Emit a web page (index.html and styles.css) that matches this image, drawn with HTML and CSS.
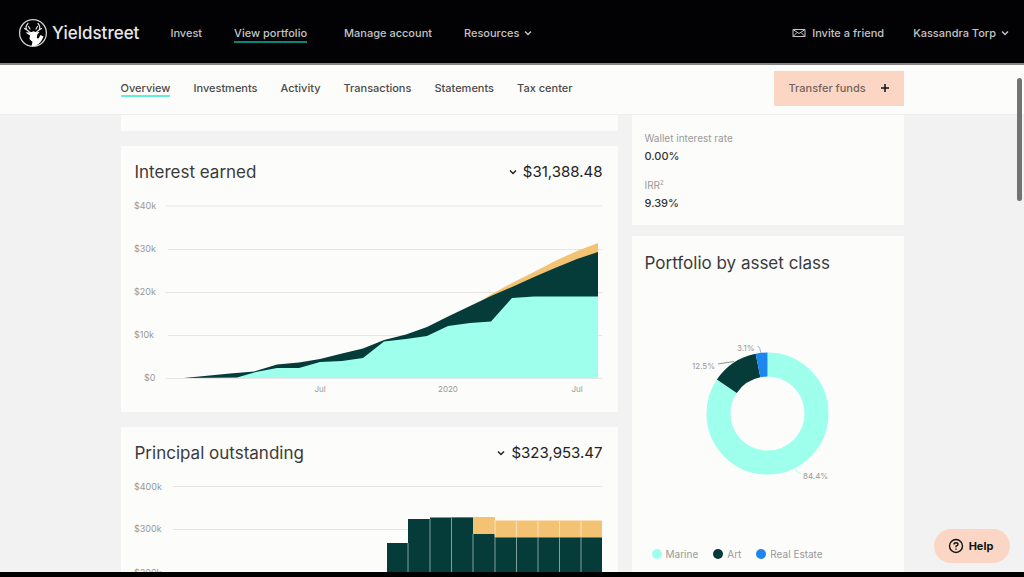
FILE: index.html
```html
<!DOCTYPE html>
<html lang="en">
<head>
<meta charset="utf-8">
<meta name="viewport" content="width=device-width, initial-scale=1">
<title>Yieldstreet – Portfolio</title>
<link rel="stylesheet" href="styles.css">
</head>
<body>
<header class="topbar">
  <a class="brand" href="#">
    <svg class="brand-mark" viewBox="0 0 30 30" aria-hidden="true">
      <circle cx="15" cy="15" r="13.4" fill="none" stroke="#d0d0d0" stroke-width="1.3"/>
      <path d="M10 5.500 Q6.500 9 9 12 Q11 14 13.500 15 M20 5.500 Q23 9 21 12 Q19 14 17 15 M9 12 L6.500 10.500 M21 12 L23.500 10.500 M10.500 8.500 L12 11 M19.500 8.500 L18 11" fill="none" stroke="#e4e4e4" stroke-width="1.200" stroke-linecap="round"/>
      <path d="M7.500 14.500 L13 14.200 L15.500 13.300 L18 14.200 L21.500 14 L19.300 16.500 L18.800 20 L20.500 20.500 L22.500 17 L25.500 18.500 Q23 25.500 17.500 28 L13.500 28 L14.500 24 L11.500 21 L12 17.500 Z" fill="#fff"/>
    </svg>
    <span>Yieldstreet</span>
  </a>
  <nav class="main-nav" aria-label="Main">
    <a href="#">Invest</a>
    <a class="current" href="#" aria-current="page">View portfolio</a>
    <a class="spaced" href="#">Manage account</a>
    <button type="button">Resources
      <svg class="chevron" viewBox="0 0 8 8" aria-hidden="true"><path d="M1 2.500 L4 5.500 L7 2.500"/></svg>
    </button>
  </nav>
  <div class="account">
    <a href="#">
      <svg class="mail" viewBox="0 0 14 10" aria-hidden="true"><path d="M1 1.500 H13 V8.500 H1 Z M1 1.500 L7 5.500 L13 1.500 M1 8.500 L5 4.500 M13 8.500 L9 4.500"/></svg>
      Invite a friend
    </a>
    <button type="button">Kassandra Torp
      <svg class="chevron" viewBox="0 0 8 8" aria-hidden="true"><path d="M1 2.500 L4 5.500 L7 2.500"/></svg>
    </button>
  </div>
</header>

<div class="subbar">
  <div class="container subbar-row">
    <nav class="tabs" aria-label="Portfolio">
      <a class="current" href="#" aria-current="page">Overview</a>
      <a href="#">Investments</a>
      <a href="#">Activity</a>
      <a href="#">Transactions</a>
      <a href="#">Statements</a>
      <a href="#">Tax center</a>
    </nav>
    <button class="transfer" type="button">Transfer funds
      <svg viewBox="0 0 10 10" aria-hidden="true"><path d="M5 1 V9 M1 5 H9"/></svg>
    </button>
  </div>
</div>

<main class="content">
  <div class="container columns">
    <div class="column wide">
      <section class="card stub"></section>

      <section class="card chart-card">
        <div class="card-head">
          <h2>Interest earned</h2>
          <button class="amount" type="button">
            <svg class="chevron" viewBox="0 0 8 8" aria-hidden="true"><path d="M1 2.500 L4 5.500 L7 2.500"/></svg>
            $31,388.48
          </button>
        </div>
        <svg class="chart" viewBox="135 192 468 206" role="img" aria-label="Interest earned over time">
          <g class="grid">
            <path d="M166 206H602M168 249.500H602M166 292.500H602M168 335.500H602M166 378.500H602"/>
          </g>
          <path fill="#f3c272" d="M483 300L490 295L512 283L534 272L555 261L577 251L598 243V300Z"/>
          <path fill="#053c3a" d="M184 378L230 373.500L254 371.500L277 364.500L299 362.500L320 359L342 353.500L363 348.500L384 340L406 334.500L427 327L448 316.500L470 306L491 296L512 287L534 277L555 268L577 259L598 252V378Z"/>
          <path fill="#9dffec" d="M184 378L237 377.500L256 372L277 368L299 368L320 362L342 361L363 358L384 341.500L406 339L427 336L448 326L470 323L491 321.500L512 298L534 296.500H598V378Z"/>
          <g class="y-labels">
            <text x="134" y="209">$40k</text>
            <text x="134" y="252">$30k</text>
            <text x="134" y="295">$20k</text>
            <text x="134" y="338">$10k</text>
            <text x="144" y="381">$0</text>
          </g>
          <g class="x-labels">
            <text x="320" y="392">Jul</text>
            <text x="448" y="392">2020</text>
            <text x="577" y="392">Jul</text>
          </g>
        </svg>
      </section>

      <section class="card chart-card">
        <div class="card-head">
          <h2>Principal outstanding</h2>
          <button class="amount" type="button">
            <svg class="chevron" viewBox="0 0 8 8" aria-hidden="true"><path d="M1 2.500 L4 5.500 L7 2.500"/></svg>
            $323,953.47
          </button>
        </div>
        <svg class="chart" viewBox="135 473 468 206" role="img" aria-label="Principal outstanding over time">
          <g class="grid">
            <path d="M173 486.500H602M173 529.500H602M173 572.500H602M173 615.500H602M173 658.500H602"/>
          </g>
          <path fill="#f3c272" d="M452 517h21v5h-21zM473 517h22v30h-22zM495 520.500H602V547H495z"/>
          <path fill="#053c3a" d="M387 543H408V519H430V517.500H473V534H495V537.500H602V659H387Z"/>
          <path stroke="#7ea19b" d="M408 543V659M430 519V659M451.500 517V659M473 534V659M495 537V659M516.500 537V659M538 537V659M559.500 537V659M581 537V659"/>
          <path stroke="#fbe3b8" d="M495 520V537M516.500 520V537M538 520V537M559.500 520V537M581 520V537"/>
          <g class="y-labels">
            <text x="134" y="490">$400k</text>
            <text x="134" y="532">$300k</text>
            <text x="134" y="576">$200k</text>
          </g>
        </svg>
      </section>
    </div>

    <div class="column narrow">
      <section class="card facts">
        <dl>
          <dt>Wallet interest rate</dt>
          <dd>0.00%</dd>
          <dt>IRR<sup>2</sup></dt>
          <dd>9.39%</dd>
        </dl>
      </section>

      <section class="card asset-card">
        <h2>Portfolio by asset class</h2>
        <svg class="chart" viewBox="645 286 246 246" role="img" aria-label="Asset classes: Marine 84.4%, Art 12.5%, Real Estate 3.1%">
          <g fill="none" stroke-width="24" transform="rotate(-90 767.500 413.500)">
            <circle cx="767.500" cy="413.500" r="49" pathLength="1000" stroke="#9dffec" stroke-dasharray="844 156"/>
            <circle cx="767.500" cy="413.500" r="49" pathLength="1000" stroke="#053c3a" stroke-dasharray="125 875" stroke-dashoffset="-844"/>
            <circle cx="767.500" cy="413.500" r="49" pathLength="1000" stroke="#1c86ee" stroke-dasharray="31 969" stroke-dashoffset="-969"/>
          </g>
          <path fill="none" stroke="#7d9a99" d="M718 364L724 363L734 361.500"/>
          <path fill="none" stroke="#8ab8d8" d="M758 346Q760 347 761 353"/>
          <path fill="none" stroke="#c3f5ec" d="M795 468Q797 473 801 474"/>
          <g class="slice-labels">
            <text x="737" y="351">3.1%</text>
            <text x="692" y="369">12.5%</text>
            <text x="803" y="479">84.4%</text>
          </g>
        </svg>
        <ul class="legend">
          <li><span class="dot marine"></span>Marine</li>
          <li><span class="dot art"></span>Art</li>
          <li><span class="dot estate"></span>Real Estate</li>
        </ul>
      </section>
    </div>
  </div>
</main>

<footer class="base"></footer>
<div class="scroll-thumb"></div>
<button class="help" type="button">
  <svg viewBox="0 0 16 16" aria-hidden="true"><circle cx="8" cy="8" r="6.500"/><path d="M6 6.500 Q6 4.800 8 4.800 Q10 4.800 10 6.400 Q10 7.400 8 8.200 V9.200 M8 10.500 V11.700"/></svg>
  Help
</button>
</body>
</html>
```
FILE: styles.css
```css
* {
  box-sizing: border-box;
}

body {
  margin: 0;
  height: 100vh;
  display: flex;
  flex-direction: column;
  overflow: hidden;
  background: #f2f2f2;
  color: #4a4a4a;
  font: 500 11px/16px Inter, "Liberation Sans", sans-serif;
}

a {
  color: inherit;
  text-decoration: none;
}

button {
  display: flex;
  align-items: center;
  padding: 0;
  border: 0;
  background: none;
  color: inherit;
  font: inherit;
}

h2 {
  margin: 0;
  font-size: 17px;
  line-height: 24px;
  font-weight: 400;
  color: #3a3a3a;
}

svg {
  display: block;
  flex: none;
}

.container {
  width: 100%;
  max-width: 783px;
  margin: 0 auto;
}

.topbar {
  flex: none;
  display: flex;
  align-items: center;
  height: 65px;
  padding: 2px 15px 0 18px;
  border-bottom: 2px solid #858585;
  background: #020204;
  color: #c4c4c4;
}

.brand {
  display: flex;
  align-items: center;
  gap: 4px;
  color: #e8e8e8;
  font-size: 17px;
  line-height: 24px;
}

.brand-mark {
  width: 30px;
  height: 30px;
}

.main-nav {
  display: flex;
  gap: 32px;
  margin-left: 31px;
}

.main-nav .spaced {
  margin-left: 5px;
}

.main-nav .current {
  box-shadow: 0 2px #0b8577;
}

.chevron {
  width: 8px;
  height: 8px;
  margin-left: 5px;
  fill: none;
  stroke: currentColor;
  stroke-width: 1.5;
}

.account {
  display: flex;
  gap: 29px;
  margin-left: auto;
}

.account a {
  display: flex;
  align-items: center;
  gap: 6px;
}

.mail {
  width: 14px;
  height: 10px;
  fill: none;
  stroke: currentColor;
}

.subbar {
  flex: none;
  background: #fcfcfa;
  border-bottom: 1px solid #ededed;
}

.subbar-row {
  display: flex;
  align-items: center;
  justify-content: space-between;
  height: 49px;
  padding-bottom: 3px;
}

.tabs {
  display: flex;
  gap: 23px;
}

.tabs .current {
  box-shadow: 0 1px #5ff0dc, inset 0 -1px #5ff0dc;
}

.transfer {
  justify-content: space-between;
  width: 130px;
  height: 35px;
  padding: 0 14px 0 15px;
  background: #fbd6c5;
  color: #75635c;
}

.transfer svg {
  width: 10px;
  height: 10px;
  stroke: #111;
  stroke-width: 1.5;
}

.content {
  flex: 1;
  min-height: 0;
  overflow: hidden;
}

.columns {
  display: grid;
  grid-template-columns: 497fr 272fr;
  gap: 14px;
}

.column {
  display: flex;
  flex-direction: column;
}

.wide {
  gap: 15px;
}

.narrow {
  gap: 11px;
}

.card {
  background: #fcfcfa;
}

.stub {
  height: 16px;
}

.chart-card {
  padding: 14px 15px 14px 14px;
}

.card-head {
  display: flex;
  align-items: center;
  justify-content: space-between;
  height: 24px;
  margin-bottom: 8px;
}

.amount {
  gap: 6px;
  color: #222;
  font-size: 15px;
  font-weight: 400;
}

.chart {
  width: 100%;
  height: auto;
  overflow: visible;
  font-size: 9px;
  font-weight: 400;
  fill: #999;
}

.slice-labels {
  font-size: 8px;
}

.grid {
  stroke: #e6e5e3;
}

.x-labels {
  font-size: 8px;
  text-anchor: middle;
}

.facts {
  height: 110px;
  padding: 15px 13px;
}

.facts dl {
  margin: 0;
}

.facts dt {
  color: #999;
  font-size: 10px;
  font-weight: 400;
}

.facts dd {
  margin: 2px 0 13px;
  color: #333;
}

.facts sup {
  font-size: 6px;
  line-height: 1;
}

.asset-card {
  flex: 1;
  padding: 15px 13px;
}

.asset-card .chart {
  margin-top: 11px;
}

.legend {
  display: flex;
  gap: 15px;
  margin: 14px 0 0;
  padding: 0 7px;
  list-style: none;
  color: #999;
  font-size: 10px;
  font-weight: 400;
}

.legend li {
  display: flex;
  align-items: center;
  gap: 4px;
}

.dot {
  width: 10px;
  height: 10px;
  border-radius: 50%;
}

.marine {
  background: #9dffec;
}

.art {
  background: #053c3a;
}

.estate {
  background: #1c86ee;
}

.base {
  flex: none;
  height: 5px;
  background: #000;
}

.scroll-thumb {
  position: absolute;
  top: 78px;
  right: 2px;
  width: 5px;
  height: 123px;
  border-radius: 3px;
  background: #737373;
}

.help {
  position: absolute;
  right: 14px;
  bottom: 14px;
  justify-content: center;
  gap: 5px;
  width: 76px;
  height: 34px;
  padding-right: 3px;
  border-radius: 17px;
  background: #fbd6c5;
  color: #111;
  font-weight: 700;
}

.help svg {
  width: 16px;
  height: 16px;
  fill: none;
  stroke: currentColor;
  stroke-width: 1.4;
}
```
